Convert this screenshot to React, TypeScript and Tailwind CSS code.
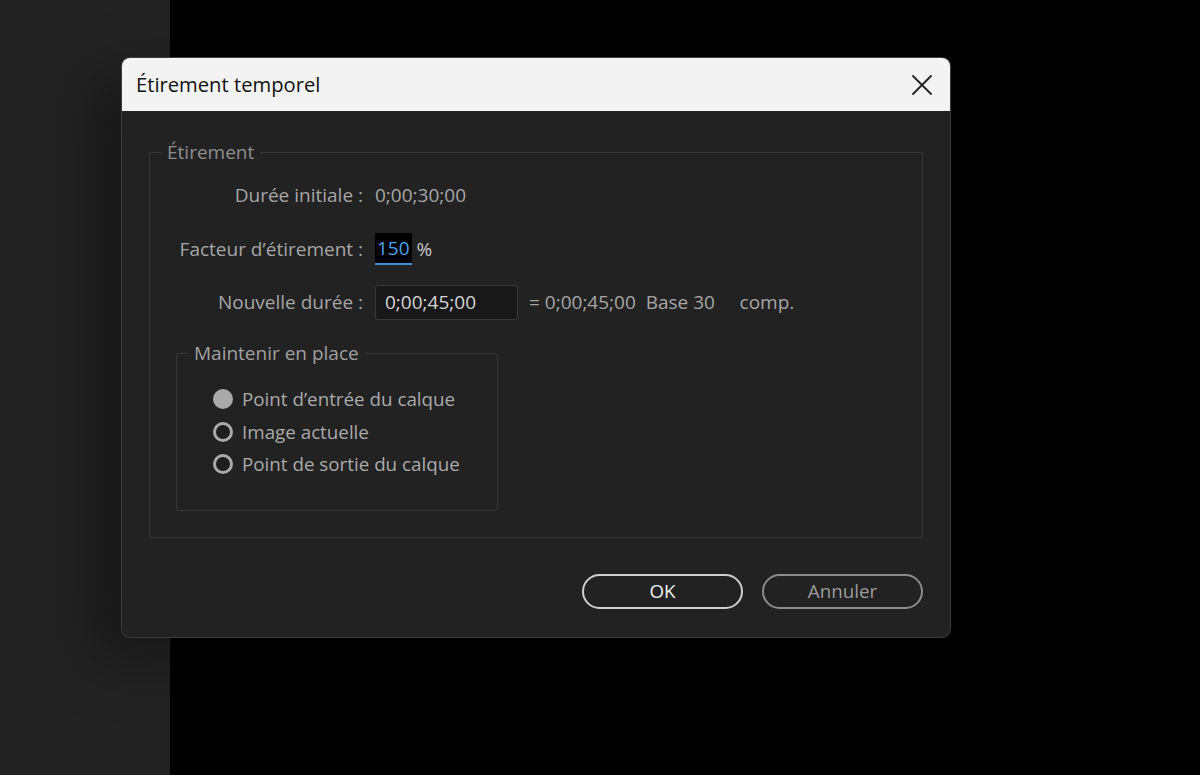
import React from 'react';

const font = { fontFamily: '"Open Sans", "Noto Sans", sans-serif' };

function Radio({ checked, label }: { checked?: boolean; label: string }) {
  return (
    <div className="flex h-[32.5px] items-center gap-[9px]">
      {checked ? (
        <span className="h-[20px] w-[20px] rounded-full bg-[#a9a9a9]" />
      ) : (
        <span className="h-[20px] w-[20px] rounded-full border-[3px] border-[#a9a9a9] bg-[#1e1e1e]" />
      )}
      <span className="text-[18.8px] text-[#aaaaaa]">{label}</span>
    </div>
  );
}

export default function App() {
  return (
    <div className="relative flex h-[775px] w-[1200px] overflow-hidden bg-black" style={font}>
      <div className="h-full w-[170px] bg-[#232323]" />

      {/* dialog window */}
      <div className="absolute left-[121px] top-[57px] flex h-[581px] w-[830px] flex-col overflow-hidden rounded-[9px] border border-[#3c3c3c] bg-[#222222] shadow-[-30px_20px_60px_rgba(0,0,0,0.35)]">
        <div className="flex h-[53px] items-center justify-between bg-[#f3f3f3] pl-[14px] pr-[16px]">
          <span className="text-[20.2px] text-[#111]">Étirement temporel</span>
          <svg width="22" height="22" viewBox="0 0 22 22" className="mr-[1px]">
            <path d="M2 2 L20 20 M20 2 L2 20" stroke="#222" strokeWidth="1.8" strokeLinecap="round" />
          </svg>
        </div>

        <div className="flex flex-1 flex-col px-[27px] pt-[41px]">
          {/* Étirement group */}
          <div className="relative h-[386px] rounded-[2px] border border-[#363636]">
            <span className="absolute left-[11px] top-[-14px] bg-[#222222] px-[6px] text-[19px] leading-[26px] text-[#8e8e8e]">
              Étirement
            </span>

            <div className="grid grid-cols-[213px_auto] items-center gap-x-[12px] pt-[27px]">
              <span className="h-[30px] text-right text-[19px] leading-[30px] text-[#a6a6a6]">Durée initiale :</span>
              <span className="h-[30px] text-[19px] leading-[30px] text-[#a6a6a6]">0;00;30;00</span>

              <span className="mt-[24px] h-[30px] text-right text-[19px] leading-[30px] text-[#a6a6a6]">Facteur d’étirement :</span>
              <div className="mt-[24px] flex h-[30px] items-center gap-[5px]">
                <span className="h-[32px] border-b-2 border-[#3f8fd6] bg-black px-[2px] text-[19px] leading-[30px] text-[#4aa3f0]">150</span>
                <span className="text-[19px] text-[#c9c9c9]">%</span>
              </div>

              <span className="mt-[21px] text-right text-[19px] text-[#a6a6a6]">Nouvelle durée :</span>
              <div className="mt-[21px] flex items-center gap-[11px]">
                <div className="flex h-[35px] w-[143px] items-center rounded-[3px] border border-[#3a3a3a] bg-[#181818] px-[9px] text-[19px] text-[#d4d4d4]">
                  0;00;45;00
                </div>
                <span className="text-[19px] text-[#a6a6a6]">= 0;00;45;00&nbsp;&nbsp;Base 30&nbsp;&nbsp;&nbsp;&nbsp;&nbsp;comp.</span>
              </div>
            </div>

            {/* Maintenir en place */}
            <div className="relative ml-[26px] mt-[33px] h-[158px] w-[322px] rounded-[2px] border border-[#363636]">
              <span className="absolute left-[11px] top-[-14px] bg-[#222222] px-[6px] text-[19px] leading-[26px] text-[#a0a0a0]">
                Maintenir en place
              </span>
              <div className="flex flex-col pl-[36px] pt-[29px]">
                <Radio checked label="Point d’entrée du calque" />
                <Radio label="Image actuelle" />
                <Radio label="Point de sortie du calque" />
              </div>
            </div>
          </div>

          <div className="mt-[36px] flex justify-end gap-[19px]">
            <button className="flex h-[35px] w-[161px] items-center justify-center rounded-full border-2 border-[#cfcfcf] text-[18.8px] text-[#f0f0f0]">
              OK
            </button>
            <button className="flex h-[35px] w-[161px] items-center justify-center rounded-full border-2 border-[#8c8c8c] text-[18.8px] text-[#9c9c9c]">
              Annuler
            </button>
          </div>
        </div>
      </div>
    </div>
  );
}
